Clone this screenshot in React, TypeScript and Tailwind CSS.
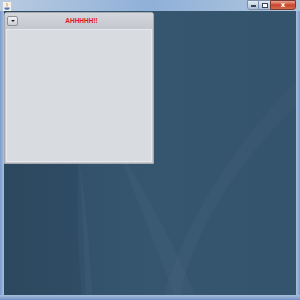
function JavaIcon() {
  return (
    <svg width="8" height="9" viewBox="0 0 8 9">
      <rect x="0" y="0" width="8" height="9" fill="#f4f1e8" />
      <path d="M4 1 C3 2.5 5 3 4 4.5" stroke="#e07a2c" strokeWidth="0.9" fill="none" />
      <path d="M1.5 5.5 H6.5 V7 C6.5 8 1.5 8 1.5 7 Z" fill="#4a78b8" />
    </svg>
  );
}

function WindowButtons() {
  return (
    <div className="flex h-[10px] items-stretch">
      <div className="flex w-[12px] items-end justify-center rounded-bl-[3px] border border-[#7d8fa8] bg-gradient-to-b from-[#e4ebf3] to-[#aebfd4] pb-[2px]">
        <div className="h-[2px] w-[5px] border border-[#34465e] bg-white" />
      </div>
      <div className="flex w-[11px] items-center justify-center border-y border-[#7d8fa8] bg-gradient-to-b from-[#e4ebf3] to-[#aebfd4]">
        <div className="h-[5px] w-[6px] border border-[#34465e] bg-white" />
      </div>
      <div className="flex w-[26px] items-center justify-center rounded-br-[3px] border border-[#7a3a30] bg-gradient-to-b from-[#e8a595] via-[#c9432f] to-[#d56a48] text-[7px] font-bold leading-none text-white [font-family:'DejaVu_Sans',sans-serif]">
        x
      </div>
    </div>
  );
}

function InternalFrame() {
  return (
    <div className="flex h-[152px] w-[150px] flex-col rounded-t-[3px] border border-[#a6aab1] bg-[#c6cad0]">
      <div className="flex h-[16px] items-center bg-gradient-to-b from-[#d3d6db] to-[#c4c8ce] px-[2px]">
        <div className="flex h-[10px] w-[11px] items-center justify-center rounded-[2px] border border-[#8c9097] bg-gradient-to-b from-[#f2f3f5] to-[#c9ccd1]">
          <div className="h-0 w-0 border-x-[2px] border-t-[2px] border-x-transparent border-t-[#222]" />
        </div>
        <div className="flex-1 pr-[6px] text-center text-[6.5px] font-bold leading-none text-[#e8141c] [font-family:'Liberation_Sans',Arial,sans-serif]">
          AHHHHH!!
        </div>
      </div>
      <div className="mx-[1px] mb-[1px] flex-1 border border-[#e6e8eb] bg-[#d8dbe0]" />
    </div>
  );
}

function Wallpaper() {
  return (
    <svg className="absolute inset-0 h-full w-full" viewBox="0 0 292 284" preserveAspectRatio="none">
      <path d="M110 130 C130 180 150 230 170 284 L190 284 C170 230 140 180 110 130 Z" fill="#ffffff" opacity="0.025" />
      <path d="M160 284 C175 230 215 150 292 70 L292 95 C230 155 190 220 176 284 Z" fill="#ffffff" opacity="0.025" />
      <path d="M75 150 C78 190 80 240 82 284 L88 284 C86 240 82 190 75 150 Z" fill="#ffffff" opacity="0.03" />
      <path d="M0 0 H80 C75 120 70 200 78 284 H0 Z" fill="#000000" opacity="0.05" />
    </svg>
  );
}

export default function App() {
  return (
    <div className="flex h-[300px] w-[300px] flex-col bg-[#7193c4]">
      {/* title bar */}
      <div className="flex h-[11px] items-start bg-gradient-to-r from-[#b9cbe0] via-[#8fb0d8] to-[#b2c6de] pl-[3px] pr-[4px]">
        <div className="pt-[2px]">
          <JavaIcon />
        </div>
        <div className="flex-1" />
        <WindowButtons />
      </div>

      <div className="flex flex-1">
        <div className="w-[4px] bg-gradient-to-r from-[#7a9ccc] to-[#a9bfdc]" />
        {/* desktop pane */}
        <div className="relative flex-1 overflow-hidden bg-gradient-to-r from-[#2f4c65] via-[#365670] to-[#34536c]">
          <Wallpaper />
          <div className="relative pt-[1px]">
            <InternalFrame />
          </div>
        </div>
        <div className="w-[4px] bg-gradient-to-r from-[#a9bfdc] to-[#7a9ccc]" />
      </div>

      <div className="h-[5px] bg-gradient-to-b from-[#a9bfdc] to-[#7193c4]" />
    </div>
  );
}
